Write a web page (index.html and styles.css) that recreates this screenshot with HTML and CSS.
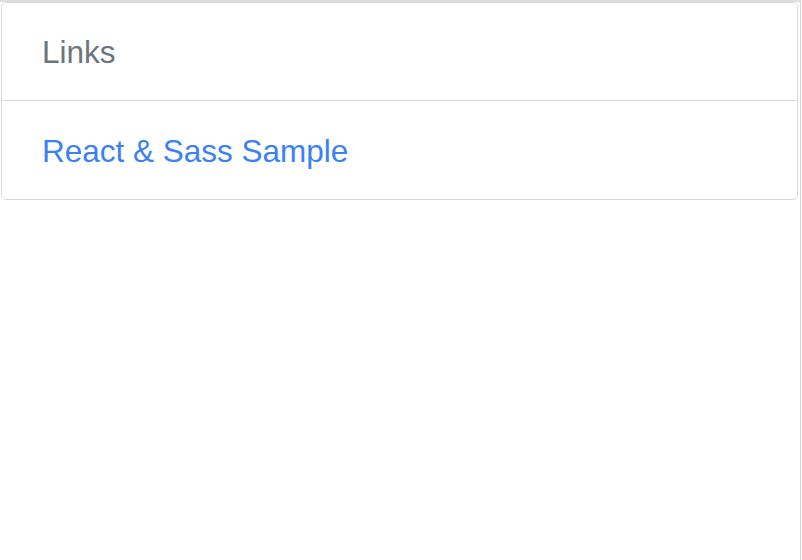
FILE: index.html
```html
<!DOCTYPE html>
<html>
<head>
<meta charset="utf-8">
<link rel="stylesheet" href="styles.css">
</head>
<body>
<div class="frame">
  <div class="card">
    <div class="card-header">Links</div>
    <ul class="list">
      <li class="list-item"><a href="#">React &amp; Sass Sample</a></li>
    </ul>
  </div>
</div>
</body>
</html>
```
FILE: styles.css
```css
html, body {
  margin: 0;
  padding: 0;
  background: #fff;
}
.frame {
  width: 800px;
  height: 558px;
  border-top: 2px solid #dedede;
  border-right: 1px solid #d8d8d8;
  box-sizing: content-box;
  font-family: "Liberation Sans", Arial, sans-serif;
}
.card {
  margin: 0 2px 0 1px;
  border: 1px solid #dadada;
  border-radius: 5px;
  overflow: hidden;
}
.card-header {
  padding: 25px 40px 24px;
  font-size: 31.5px;
  line-height: 48px;
  color: #6c757d;
  border-bottom: 1px solid #dadada;
}
.list {
  list-style: none;
  margin: 0;
  padding: 0;
}
.list-item {
  padding: 26px 40px 24px;
  font-size: 31.5px;
  line-height: 48px;
}
.list-item a {
  color: #3b80f6;
  text-decoration: none;
}
```
